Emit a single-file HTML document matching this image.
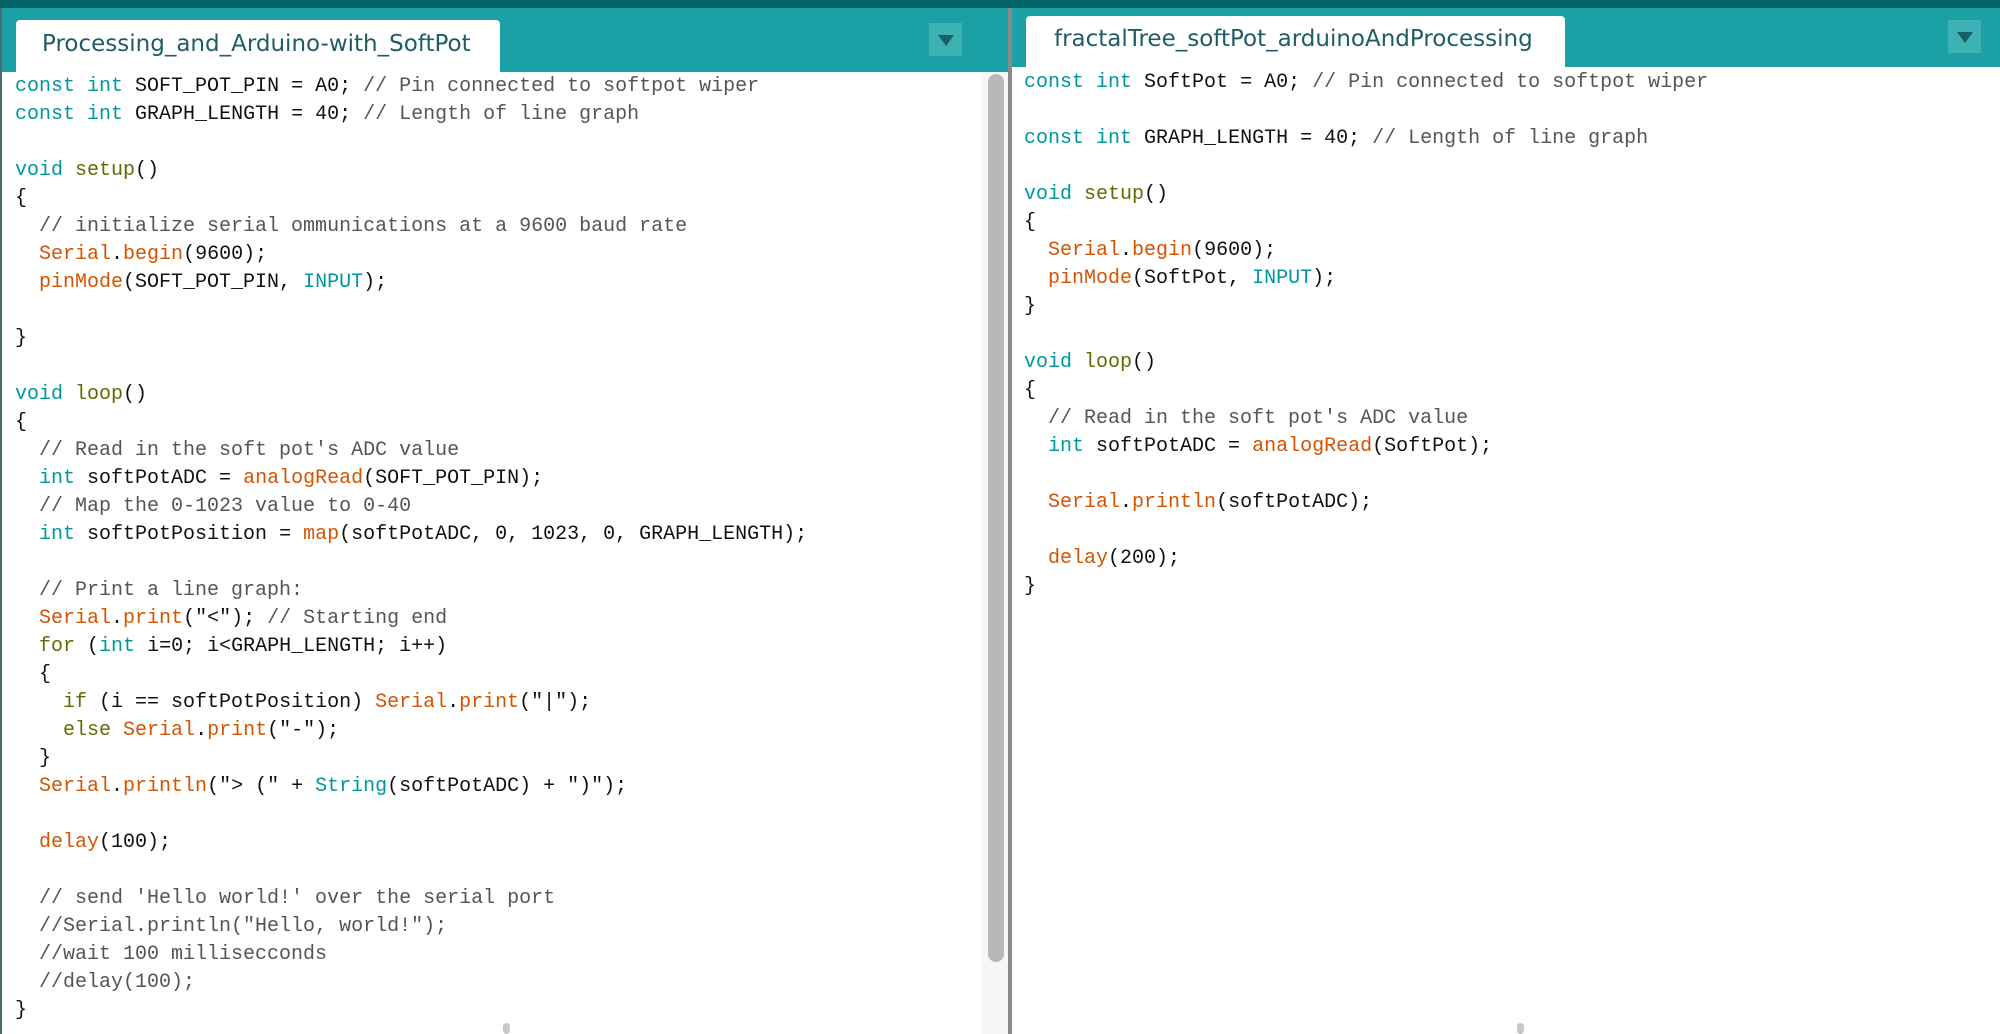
<!DOCTYPE html>
<html><head><meta charset="utf-8"><style>
body{margin:0;width:2000px;height:1034px;overflow:hidden;background:#fff;position:relative;font-family:"Liberation Mono",monospace}
.top{position:absolute;left:0;top:0;width:2000px;height:8px;background:#006468}
.hdr{position:absolute;background:#1ba0a5}
.tab{position:absolute;background:#fff;border-radius:4px 4px 0 0;font-family:"DejaVu Sans","Liberation Sans",sans-serif;font-size:23px;color:#1f5c64;box-sizing:border-box;line-height:1}
.dd{position:absolute;width:33px;height:33px;background:#3eb1b5}
.dd:after{content:"";position:absolute;left:9px;top:12px;border-left:8px solid transparent;border-right:8px solid transparent;border-top:11px solid #1a5f66}
pre{position:absolute;margin:0;font-family:"Liberation Mono",monospace;font-size:20px;line-height:28px;color:#111}
.k{color:#00979c}.f{color:#5e6d03}.o{color:#d35400}.c{color:#555}
</style></head><body>
<div class="top"></div>
<div class="hdr" style="left:2px;top:8px;width:1006px;height:64px"></div>
<div style="position:absolute;left:0;top:8px;width:2px;height:1026px;background:#4a6a6d"></div>
<div class="tab" style="left:16px;top:20px;width:484px;height:52px;padding-top:13px;padding-left:26px">Processing_and_Arduino-with_SoftPot</div>
<div class="dd" style="left:929px;top:23px"></div>
<div class="hdr" style="left:1012px;top:8px;width:988px;height:59px"></div>
<div class="tab" style="left:1026px;top:16px;width:539px;height:51px;padding-top:12px;padding-left:28px">fractalTree_softPot_arduinoAndProcessing</div>
<div class="dd" style="left:1948px;top:20px"></div>
<div style="position:absolute;left:982px;top:72px;width:26px;height:962px;background:#f6f6f6"></div>
<div style="position:absolute;left:988px;top:74px;width:16px;height:888px;background:#b8b8b8;border-radius:8px"></div>
<div style="position:absolute;left:1008px;top:8px;width:4px;height:1026px;background:#8a8a8a"></div>
<div style="position:absolute;left:503px;top:1023px;width:7px;height:11px;border-radius:4px;background:#c8c8c8"></div>
<div style="position:absolute;left:1517px;top:1023px;width:7px;height:11px;border-radius:4px;background:#c8c8c8"></div>
<pre style="left:15px;top:73px"><span class="k">const</span> <span class="k">int</span> SOFT_POT_PIN = A0; <span class="c">// Pin connected to softpot wiper</span>
<span class="k">const</span> <span class="k">int</span> GRAPH_LENGTH = 40; <span class="c">// Length of line graph</span>

<span class="k">void</span> <span class="f">setup</span>()
{
  <span class="c">// initialize serial ommunications at a 9600 baud rate</span>
  <span class="o">Serial</span>.<span class="o">begin</span>(9600);
  <span class="o">pinMode</span>(SOFT_POT_PIN, <span class="k">INPUT</span>);

}

<span class="k">void</span> <span class="f">loop</span>()
{
  <span class="c">// Read in the soft pot's ADC value</span>
  <span class="k">int</span> softPotADC = <span class="o">analogRead</span>(SOFT_POT_PIN);
  <span class="c">// Map the 0-1023 value to 0-40</span>
  <span class="k">int</span> softPotPosition = <span class="o">map</span>(softPotADC, 0, 1023, 0, GRAPH_LENGTH);

  <span class="c">// Print a line graph:</span>
  <span class="o">Serial</span>.<span class="o">print</span>("&lt;"); <span class="c">// Starting end</span>
  <span class="f">for</span> (<span class="k">int</span> i=0; i&lt;GRAPH_LENGTH; i++)
  {
    <span class="f">if</span> (i == softPotPosition) <span class="o">Serial</span>.<span class="o">print</span>("|");
    <span class="f">else</span> <span class="o">Serial</span>.<span class="o">print</span>("-");
  }
  <span class="o">Serial</span>.<span class="o">println</span>("&gt; (" + <span class="k">String</span>(softPotADC) + ")");

  <span class="o">delay</span>(100);

  <span class="c">// send 'Hello world!' over the serial port</span>
  <span class="c">//Serial.println("Hello, world!");</span>
  <span class="c">//wait 100 millisecconds</span>
  <span class="c">//delay(100);</span>
}</pre>
<pre style="left:1024px;top:69px"><span class="k">const</span> <span class="k">int</span> SoftPot = A0; <span class="c">// Pin connected to softpot wiper</span>

<span class="k">const</span> <span class="k">int</span> GRAPH_LENGTH = 40; <span class="c">// Length of line graph</span>

<span class="k">void</span> <span class="f">setup</span>()
{
  <span class="o">Serial</span>.<span class="o">begin</span>(9600);
  <span class="o">pinMode</span>(SoftPot, <span class="k">INPUT</span>);
}

<span class="k">void</span> <span class="f">loop</span>()
{
  <span class="c">// Read in the soft pot's ADC value</span>
  <span class="k">int</span> softPotADC = <span class="o">analogRead</span>(SoftPot);

  <span class="o">Serial</span>.<span class="o">println</span>(softPotADC);

  <span class="o">delay</span>(200);
}</pre>
</body></html>
